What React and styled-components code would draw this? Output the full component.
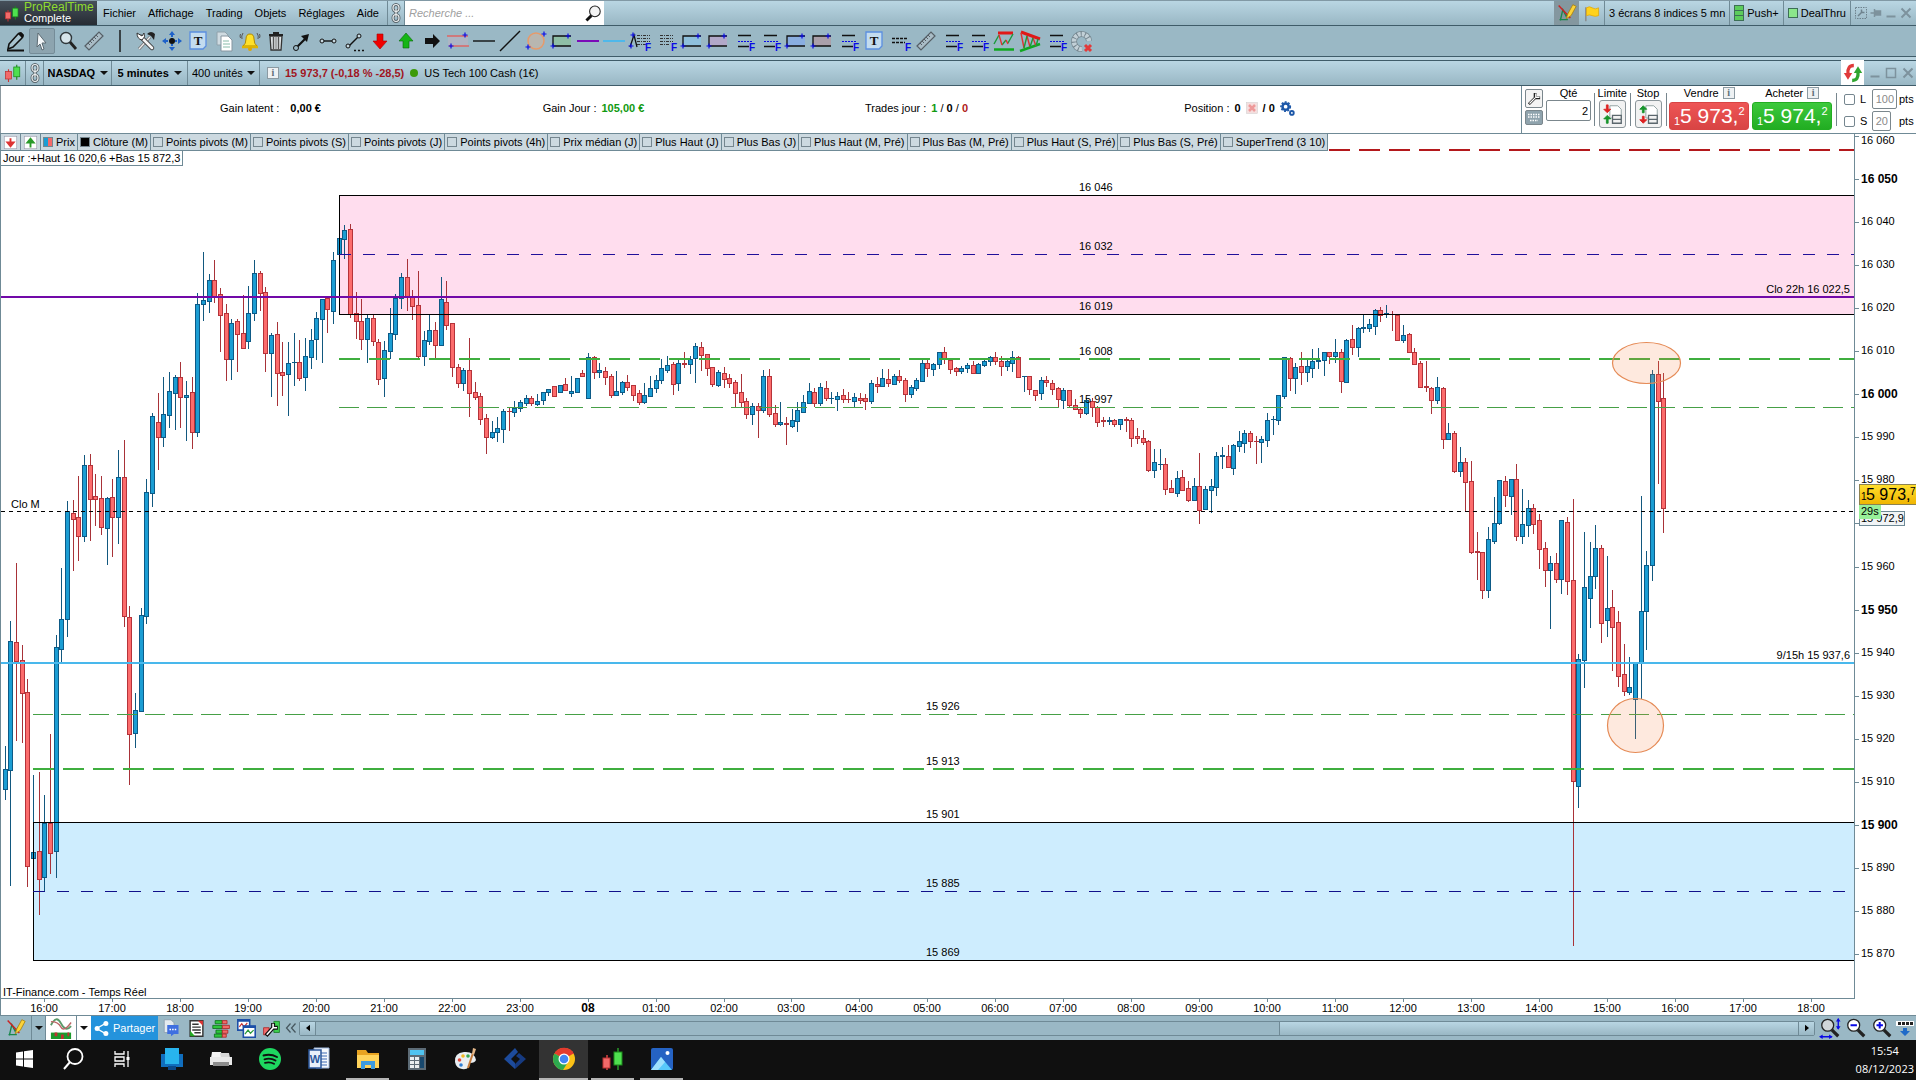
import React from "react";
import styled, { createGlobalStyle } from "styled-components";

const Global = createGlobalStyle`
  *, *::before, *::after { box-sizing: border-box; }
  html, body { margin: 0; padding: 0; background: #fff; }
  body, button, input, select {
    font-family: "Liberation Sans", Arial, sans-serif;
    font-size: 11px;
    color: #000;
  }
  button, select { border: 0; background: none; padding: 0; margin: 0; cursor: pointer; }
`;

/* ---------- shared pieces ---------- */

const chrome = "linear-gradient(#b9d6e3, #99b7c4)";
const edge = "#6f8a96";
const dark = "#3f5c69";

const Glyph = styled.svg`
  display: block;
  flex: none;
  width: ${(p) => p.$w || 24}px;
  height: ${(p) => p.$h || 24}px;
`;

const Icon = ({ w = 24, h = w, box = "0 0 24 24", children }) => (
  <Glyph $w={w} $h={h} viewBox={box} aria-hidden="true" fill="none">
    {children}
  </Glyph>
);

const App_ = styled.div`
  display: flex;
  flex-direction: column;
  min-width: 1400px;
  overflow: hidden;
`;

const Spacer = styled.div`
  flex: 1;
`;

const IconButton = styled.button`
  display: flex;
  align-items: center;
  justify-content: center;
  flex: none;
  width: ${(p) => p.$w || 16}px;
  align-self: stretch;
  background: ${(p) => p.$bg || "none"};
`;

/* ---------- menu bar ---------- */

const MenuBar = styled.header`
  display: flex;
  height: 26px;
  background: ${chrome};
  border-top: 1px solid #8199a5;
  border-bottom: 1px solid ${dark};
`;

const Brand = styled.div`
  display: flex;
  align-items: center;
  gap: 4px;
  width: 97px;
  padding-left: 4px;
  background: linear-gradient(#46505a, #262c33);
  color: #fff;
  line-height: 11px;
`;

const BrandName = styled.strong`
  display: block;
  color: #8fdc2e;
  font-size: 12px;
  font-weight: 400;
`;

const Menu = styled.nav`
  display: flex;
  align-items: center;
  gap: 12px;
  width: 290px;
  padding-left: 6px;
  white-space: nowrap;
`;

const ChainCell = styled.div`
  display: flex;
  align-items: center;
  justify-content: center;
  width: 18px;
  border-left: 1px solid ${edge};
  border-right: 1px solid ${edge};
`;

const Search = styled.label`
  display: flex;
  align-items: center;
  width: 199px;
  padding: 0 2px;
  background: #fff;
`;

const SearchInput = styled.input`
  flex: 1;
  min-width: 0;
  border: 0;
  outline: 0;
  font-style: italic;
  &::placeholder { color: #a0a0a0; }
`;

const MenuCell = styled.div`
  display: flex;
  align-items: center;
  gap: 3px;
  padding: 0 4px;
  border-left: 1px solid ${edge};
  white-space: nowrap;
`;

const Meter = styled.span`
  width: 10px;
  height: ${(p) => p.$h}px;
  border: 1px solid #3d6f56;
  background: ${(p) =>
    p.$bars
      ? "repeating-linear-gradient(#5ccc5c 0 4px, #3d6f56 4px 5px)"
      : "#8be68b"};
`;

/* ---------- drawing toolbar ---------- */

const ToolBar = styled.div`
  display: flex;
  align-items: center;
  height: 31px;
  padding-left: 3px;
  background: #9ab8c5;
  border-bottom: 1px solid ${dark};
`;

const Tool = styled.button`
  display: flex;
  align-items: center;
  justify-content: center;
  width: 26px;
  height: 26px;
  border-radius: 2px;
  background: ${(p) => (p.$on ? "#8da4af" : "none")};
  border: 1px solid ${(p) => (p.$on ? "#758c98" : "transparent")};
`;

const black = "#111";
const blue = "#0a0ae6";

const Plus = ({ x, y }) => (
  <path d={`M${x - 2.5} ${y}h5M${x} ${y - 2.5}v5`} stroke={blue} strokeWidth="1.2" />
);

const FLetter = () => (
  <text x="17" y="22" fontSize="10" fontWeight="700" fill={blue}>F</text>
);

const Levels = () => (
  <>
    <path d="M6 6.5h13M6 17.5h11" stroke={black} strokeWidth="1.4" />
    <path d="M6 12.5h14" stroke={blue} strokeWidth="1.2" strokeDasharray="2 1" />
    <FLetter />
  </>
);

const Box = ({ fill }) => (
  <>
    <rect x="3" y="7" width="18" height="10" fill={fill} />
    <path d="M3 17V7h18M3 17h18" stroke={black} strokeWidth="1.3" />
    <Plus x={18} y={7} />
    <Plus x={3} y={17} />
  </>
);

const RulerArt = () => (
  <>
    <path d="M3 17 17 3l4 4L7 21z" stroke="#555f66" strokeWidth="1.2" fill="#a9bcc6" />
    <path d="m6 14 2 2m0-4 2 2m0-4 2 2m0-4 2 2m0-4 2 2" stroke="#555f66" />
  </>
);

const TextArt = () => (
  <>
    <path d="M4 3h16v14l-3 3H4z" fill="#c3dcef" stroke="#5b8fe0" strokeWidth="1.3" />
    <text x="12" y="16" textAnchor="middle" fontFamily="Liberation Serif, serif" fontWeight="700" fontSize="13" fill="#111">T</text>
  </>
);

const Dashes = ({ x = 6 }) => (
  <path d={`M${x} 6.5h13M${x} 9.5h13M${x} 12.5h13M${x} 15.5h10`} stroke="#333" strokeWidth="1.2" strokeDasharray="3 1 1 1" />
);

const tools = [
  ["Crayon", <><path d="m5 15 9-10q2-2 4 0t0 4L9 18l-5 2z" stroke={black} strokeWidth="1.6" fill="#a8c3cf" /><path d="M3 21.5h17" stroke={black} strokeWidth="2" /><path d="m14 5 4 4 2-3-3-3z" fill={black} /></>],
  ["Pointeur", <path d="m8 4 8 10h-4l2 6-2 1-2-6-3 3z" fill="#f3f6f8" stroke="#5c6a72" />],
  ["Loupe", <><circle cx="10" cy="9" r="5.5" fill="#d6e4ea" stroke="#30383c" strokeWidth="1.4" /><path d="m14 13 6 7" stroke="#222" strokeWidth="2.8" /></>],
  ["Règle", <RulerArt />],
  ["Séparateur", <path d="M12 1v22" stroke={black} strokeWidth="1.4" />],
  ["Outils", <><path d="m5 20 11-12" stroke="#777" strokeWidth="3" /><path d="m5 20 11-12" stroke="#eee" strokeWidth="1.2" /><path d="M13 5q4-4 8 0l-1 6-3-4z" fill="#222" /><path d="m7 8 11 11" stroke="#333" strokeWidth="4.500" strokeLinecap="round" /><path d="m7 8 11 11" stroke="#f4f4f4" strokeWidth="2.800" strokeLinecap="round" /><path d="M3 4q0 6 5 7 4-3 2-7L8 7z" fill="#fff" stroke="#333" /></>],
  ["Déplacer", <><path d="m12 2 3 4H9zM12 22l3-4H9zM2 12l4-3v6zM22 12l-4-3v6z" fill="#1f62c9" /><path d="M12 6v12M6 12h12" stroke="#1f62c9" strokeWidth="2" strokeDasharray="2 1" /><circle cx="12" cy="12" r="3" fill="#111" /></>],
  ["Texte", <TextArt />],
  ["Copier", <><path d="M5 3h8l3 3v10H5z" fill="#cfdbe1" stroke="#90a2ab" /><path d="M9 7h7l4 4v11H9z" fill="#fff" stroke="#8595a0" /><path d="M11 12h6M11 15h7M11 18h7" stroke="#8ba" /></>],
  ["Alarme", <><path d="M5 17q3-2 3-7 0-5 4-5t4 5q0 5 3 7z" fill="#ffe02a" stroke="#b08a00" /><path d="M4 18h16" stroke="#e0b400" strokeWidth="2.500" /><circle cx="12" cy="20" r="2" fill="#e0a800" /><path d="M5 4Q3 7 4 10M19 4q2 3 1 6M2.500 5q-1 2 0 4M21.500 5q1 2 0 4" stroke="#555" /></>],
  ["Supprimer", <><path d="M6 7h12l-1 14H7z" fill="#dfe3e5" stroke="#333" strokeWidth="1.3" /><path d="M9.500 8v12M14.500 8v12" stroke="#555" strokeWidth="1.400" /><path d="M12 8v12" stroke="#777" /><path d="M5 6h14M9 4h6" stroke="#222" strokeWidth="2" /></>],
  ["Flèche", <><path d="m7 18 9-9" stroke={black} strokeWidth="2.2" /><path d="m19 5-2 8-6-6z" fill={black} /><circle cx="6" cy="19" r="2.500" fill="#9ab8c5" stroke={black} /></>],
  ["Segment", <><path d="M6 12h12" stroke={black} strokeWidth="1.4" /><circle cx="6" cy="12" r="2" fill="#c6d8e0" stroke={black} /><circle cx="18" cy="12" r="2" fill="#c6d8e0" stroke={black} /></>],
  ["Prolongement", <><path d="m7 17 9-9" stroke={black} strokeWidth="1.4" /><circle cx="6" cy="17" r="2" fill="#c6d8e0" stroke={black} /><circle cx="17" cy="7" r="2" fill="#c6d8e0" stroke={black} /><path d="M12 21.500h10" stroke={black} strokeWidth="1.4" strokeDasharray="2 2" /></>],
  ["Flèche baissière", <path d="M9 5h6v7h4l-7 8-7-8h4z" fill="#f00000" stroke="#a00" strokeWidth=".6" />],
  ["Flèche haussière", <path d="M9 19h6v-7h4l-7-8-7 8h4z" fill="#16b516" stroke="#086808" strokeWidth=".6" />],
  ["Flèche droite", <path d="M5 9h8V5l7 7-7 7v-4H5z" fill={black} />],
  ["Canal", <><rect x="2" y="7" width="20" height="10" fill="#aeb5c3" /><path d="M1 7h21M3 17h20" stroke="#d66" strokeWidth="1.4" /><Plus x={19} y={6} /><Plus x={5} y={17} /></>],
  ["Ligne horizontale", <path d="M1 12h22" stroke={black} strokeWidth="1.4" />],
  ["Ligne oblique", <path d="M2 22 22 2" stroke={black} strokeWidth="1.4" />],
  ["Ellipse", <><circle cx="12" cy="12" r="8" fill="#b8b6b0" stroke="#e79a6a" strokeWidth="1.5" /><Plus x={20} y={5} /><Plus x={4} y={18} /></>],
  ["Rectangle vert", <Box fill="#8fbfa6" />],
  ["Ligne violette", <path d="M1 12h22" stroke="#7a0bb8" strokeWidth="2" />],
  ["Ligne bleue", <path d="M1 12h22" stroke="#4fb8ea" strokeWidth="2" />],
  ["Fourchette", <><path d="m2 18 4-12 3 12" stroke={black} strokeWidth="1.3" /><Dashes x={9} /><Plus x={5} y={6} /><Plus x={3} y={17} /><FLetter /></>],
  ["Fibonacci", <><Dashes /><FLetter /></>],
  ["Rectangle bleu", <Box fill="#8fc0dc" />],
  ["Rectangle mauve", <Box fill="#b2a8c8" />],
  ["Niveaux 1", <Levels />],
  ["Niveaux 2", <Levels />],
  ["Rectangle azur", <Box fill="#8aaee0" />],
  ["Rectangle gris", <Box fill="#aaa0aa" />],
  ["Niveaux 3", <Levels />],
  ["Étiquette", <TextArt />],
  ["Projection", <><path d="M4 9.500h15M4 13.500h13" stroke={black} strokeWidth="1.3" strokeDasharray="3 1" /><FLetter /></>],
  ["Mesure", <RulerArt />],
  ["Niveaux 4", <Levels />],
  ["Niveaux 5", <Levels />],
  ["Range", <><path d="M6 4h15" stroke="#e01818" strokeWidth="3" /><path d="M2 20.500h20" stroke="#10a820" strokeWidth="2.500" /><path d="m2 15 5-9M10 16l4-5M16 14l5-9" stroke="#1a9a3a" strokeWidth="1.400" /><path d="m7 6 3 10M14 11l2 4" stroke="#d33" strokeWidth="1.400" /></>],
  ["Triangle", <><path d="m3 3 19 7" stroke="#e01818" strokeWidth="3" /><path d="m2 22 20-7" stroke="#10a820" strokeWidth="2.500" /><path d="m3 4 3 15M9 7l3 11M15 9l3 8" stroke="#d33" strokeWidth="1.400" /><path d="M6 19 9 7M12 18l3-9M18 17l2-7" stroke="#1a9a3a" strokeWidth="1.400" /></>],
  ["Niveaux 6", <Levels />],
  ["Aimant", <><path d="M19 12a7.500 7.500 0 1 0-7 8" stroke="#74858e" strokeWidth="6" /><path d="M19 12a7.500 7.500 0 1 0-7 8" stroke="#c2d0d7" strokeWidth="4.500" strokeDasharray="3 1" /><path d="m15 16 6 6m0-6-6 6" stroke="#e23a3a" strokeWidth="3" /></>],
];

/* ---------- instrument bar ---------- */

const InstrumentWrap = styled.div`
  display: flex;
  height: 29px;
  padding-top: 3px;
  background: #b9d3df;
  border-bottom: 1px solid ${dark};
`;

const InstrumentBar = styled.div`
  display: flex;
  flex: 1;
  align-items: stretch;
  background: ${chrome};
  border-top: 1px solid ${dark};
`;

const Cell = styled.div`
  display: flex;
  align-items: center;
  justify-content: center;
  gap: 4px;
  width: ${(p) => p.$w}px;
  border-right: 1px solid ${edge};
`;

const Drop = styled.select`
  appearance: none;
  outline: 0;
  font-weight: ${(p) => (p.$bold ? 700 : 400)};
`;

const Caret = styled.span`
  width: 0;
  border: 4px solid transparent;
  border-top-color: #111;
  border-bottom: 0;
`;

const Info = styled.button`
  width: 12px;
  height: 12px;
  border: 1px solid #8b9aa2;
  background: #eef1f3;
  color: #5f6f78;
  font: 700 10px/10px "Liberation Serif", serif;
`;

const Quote = styled.div`
  display: flex;
  align-items: center;
  gap: 6px;
  padding-left: 7px;
  white-space: nowrap;
`;

const Change = styled.strong`
  color: #a01522;
`;

const Dot = styled.span`
  width: 8px;
  height: 8px;
  border-radius: 50%;
  background: #3c9a0a;
`;

const SyncTab = styled.button`
  display: flex;
  align-items: center;
  justify-content: center;
  width: 23px;
  background: #fff;
`;

const WindowButtons = styled.div`
  display: flex;
  align-items: center;
  justify-content: space-around;
  width: 52px;
  padding-left: 3px;
  background: ${chrome};
  border-top: 1px solid ${dark};
`;

/* ---------- trading panel ---------- */

const TradePanel = styled.section`
  display: flex;
  height: 47px;
  border-left: 1px solid #8b989f;
`;

const Stats = styled.div`
  display: grid;
  flex: 1;
  grid-template-columns: repeat(4, 1fr);
  align-items: center;
  padding: 0 120px 3px 108px;
  border-right: 1px solid ${edge};
`;

const Stat = styled.div`
  display: flex;
  align-items: center;
  justify-content: center;
  gap: ${(p) => p.$gap || 5}px;
  white-space: nowrap;
`;

const Value = styled.strong`
  color: ${(p) => p.$c || "#000"};
`;

const Order = styled.div`
  display: flex;
  width: 394px;
  padding: 1px 0 3px 3px;
  gap: 3px;
`;

const Stack = styled.div`
  display: flex;
  flex-direction: column;
  align-items: center;
  gap: ${(p) => p.$gap || 0}px;
  flex: none;
  width: ${(p) => p.$w}px;
  padding-top: ${(p) => p.$top || 0}px;
`;

const Divider = styled.span`
  width: 1px;
  margin: ${(p) => (p.$wide ? "6px 3px 4px 1px" : "6px 0 4px")};
  background: #77868e;
`;

const SmallButton = styled.button`
  display: flex;
  align-items: center;
  justify-content: center;
  width: 18px;
  height: ${(p) => p.$h}px;
  border-radius: 2px;
  border: 1px solid #7b878d;
  background: ${(p) => p.$bg || "#f4f4f4"};
`;

const Caption = styled.label`
  display: flex;
  align-items: flex-start;
  gap: 4px;
  height: ${(p) => p.$h || 13}px;
  line-height: 12px;
  white-space: nowrap;
`;

const Qty = styled.input`
  width: 45px;
  height: 21px;
  padding: 0 2px;
  border: 1px solid #7b878d;
  border-radius: 2px;
  text-align: right;
`;

const OrderButton = styled.button`
  display: flex;
  align-items: center;
  justify-content: center;
  width: 27px;
  height: 28px;
  border: 1px solid #8b959a;
  border-radius: 3px;
  background: #f2f2f2;
`;

const PriceButton = styled.button`
  display: flex;
  align-items: center;
  justify-content: center;
  width: 80px;
  height: 28px;
  border-radius: 3px;
  border: 1px solid ${(p) => p.$c2};
  background: linear-gradient(${(p) => p.$c1}, ${(p) => p.$c2});
  color: #fff;
  font-size: 21px;
  line-height: 26px;
  white-space: nowrap;
`;

const Lead = styled.small`
  align-self: flex-end;
  font-size: 11px;
  line-height: 16px;
`;

const Trail = styled.small`
  align-self: flex-start;
  font-size: 11px;
  line-height: 16px;
`;

const StopRow = styled.label`
  display: grid;
  grid-template-columns: 14px 10px 25px 16px;
  align-items: center;
  gap: 2px;
  height: 22px;
`;

const Tick = styled.input.attrs({ type: "checkbox" })`
  appearance: none;
  flex: none;
  width: ${(p) => p.$s || 9}px;
  height: ${(p) => p.$s || 9}px;
  margin: 0;
  border: 1px solid #75868f;
  border-radius: ${(p) => p.$r || 0}px;
  background: ${(p) => p.$bg || "transparent"};
`;

const Points = styled.input`
  width: ${(p) => p.$w}px;
  height: 20px;
  padding: 0 2px;
  border: 1px solid #7b878d;
  border-radius: 2px;
  color: #8a8a8a;
  text-align: right;
`;

const Pts = styled.span`
  white-space: nowrap;
`;

/* ---------- chart ---------- */

const ChartArea = styled.main`
  position: relative;
`;

const Legend = styled.div`
  position: absolute;
  left: 0;
  top: 0;
  display: flex;
  flex-direction: column;
  align-items: flex-start;
`;

const LegendBar = styled.div`
  display: flex;
  height: 18px;
  border: 1px solid ${edge};
  border-right: 0;
  background: #ccd9e0;
`;

const LegendItem = styled.label`
  display: flex;
  align-items: center;
  gap: 3px;
  padding: 0 2px;
  border-right: 1px solid ${edge};
  white-space: nowrap;
`;

const DayRange = styled.div`
  height: 15px;
  padding: 0 2px;
  border: 1px solid ${edge};
  border-top: 0;
  background: #fff;
  line-height: 14px;
`;

const Plot = styled.svg`
  display: block;
  width: 100%;
  height: auto;
`;

const indicators = [
  "Points pivots (M)", "Points pivots (S)", "Points pivots (J)", "Points pivots (4h)",
  "Prix médian (J)", "Plus Haut (J)", "Plus Bas (J)", "Plus Haut (M, Pré)",
  "Plus Bas (M, Pré)", "Plus Haut (S, Pré)", "Plus Bas (S, Pré)", "SuperTrend (3 10)",
];

/* Each candle: direction + abscissa, high, body top, body bottom, low */
const candles = `
B5 746 769 789 799|B10 621 641 770 885|R16 563 642 661 740|R22 645 660 693 742|R27 679 692 866 886
B33 775 852 858 858|R39 772 851 879 914|B44 795 823 877 890|R50 734 823 853 873|B56 635 647 851 877
B61 568 619 649 662|B67 501 511 619 636|R73 500 513 519 570|R78 476 517 536 560|B84 455 465 536 541
R90 454 465 499 540|R95 474 496 499 525|R101 476 498 527 534|B107 497 498 528 564|R112 479 497 517 556
B118 450 477 517 543|R124 440 477 616 626|R129 606 617 734 784|B135 693 710 733 747|B141 608 615 711 711
B146 479 492 616 623|B152 413 416 493 506|R158 393 422 437 469|B163 377 414 437 446|B169 372 391 415 427
B175 375 377 393 429|R180 362 377 397 427|B186 381 395 397 440|R192 377 392 432 448|B197 293 304 432 436
B203 252 300 304 320|B209 274 280 301 312|R214 260 280 296 302|R220 288 294 315 351|R226 304 313 359 380
B231 319 323 359 379|R237 319 321 334 371|R243 295 333 348 348|B248 286 313 341 348|B254 260 273 313 320
R260 271 273 293 310|R265 287 292 353 371|B271 333 335 353 396|R277 322 334 373 405|R282 342 372 375 395
B288 342 363 374 415|B294 333 362 362 385|R299 340 362 378 380|B305 338 356 377 390|B311 329 340 357 368
B316 312 318 339 359|B322 299 299 319 362|R327 297 298 309 332|B333 252 260 311 323|B339 238 238 254 254
B344 225 230 239 258|R350 224 229 314 317|R356 292 313 321 338|R361 299 321 339 349|B367 315 318 339 362
R373 315 318 341 345|R378 339 342 379 384|B384 341 350 378 396|B390 308 333 351 358|B395 294 298 334 339
B401 273 277 298 308|R407 259 277 296 310|R412 290 297 306 319|R418 271 305 356 358|B424 331 340 356 365
B429 315 330 341 344|R435 322 330 345 359|B441 277 299 345 345|R446 281 302 325 329|R452 323 323 367 376
R458 364 367 383 387|B463 368 370 383 390|R469 338 370 393 416|R475 382 392 397 399|R480 393 396 419 424
R486 414 418 437 453|B492 421 432 437 438|B497 417 428 432 441|B503 409 411 429 442|R509 408 411 411 430
B514 401 408 412 416|B520 400 402 408 411|B526 395 398 403 405|R531 396 398 403 405|B537 394 401 404 405
B543 392 392 400 404|B548 389 389 392 395|R554 386 386 396 396|B560 385 385 392 392|R565 378 384 390 390
B571 376 391 393 396|B577 378 378 392 392|R582 370 373 376 376|B588 353 357 398 398|R594 356 357 372 378
B599 363 370 372 377|R605 367 371 377 384|R611 374 376 395 397|B616 371 391 395 395|B622 381 382 392 394
R627 375 382 387 390|R633 385 385 395 400|R639 390 393 402 404|B644 383 395 402 403|B650 376 388 396 396
B656 375 380 388 392|B661 359 368 380 383|B667 356 365 370 372|R673 362 364 384 394|B678 360 363 383 390
R684 352 363 364 367|B690 356 359 364 373|B695 343 346 358 382|R701 342 347 355 370|R707 354 354 368 375
R712 367 367 384 386|B718 370 372 385 386|R724 367 373 379 387|R729 374 378 383 387|R735 380 382 393 407
R741 374 392 402 406|R746 398 401 414 418|B752 403 406 414 424|R758 403 406 410 437|B763 370 376 410 412
R769 369 376 414 416|R775 405 413 424 426|B780 402 422 424 425|R786 417 423 424 444|B792 409 420 426 427
B797 402 410 421 431|B803 395 402 412 412|B809 383 391 403 403|R814 388 392 403 406|B820 383 387 403 405
R826 381 388 398 400|B831 392 398 398 403|B837 392 396 399 410|R843 389 395 399 402|R848 392 399 399 402
B854 393 397 401 406|R860 393 398 400 403|R865 394 398 401 409|B871 380 383 401 403|R877 377 384 386 392
B882 369 378 386 386|R888 369 379 383 386|B894 374 376 384 384|R899 370 376 380 382|R905 378 380 394 401
B911 385 387 394 397|B916 378 380 388 390|B922 360 363 381 381|R927 360 363 368 376|B933 363 364 369 375
B939 352 352 364 368|R944 347 352 359 363|R950 359 360 369 373|R956 367 368 371 375|B961 366 368 371 373
B967 363 365 368 372|R973 361 365 373 373|B978 363 364 373 373|B984 360 361 365 366|B990 356 357 361 365
R995 352 357 361 364|R1001 356 361 366 375|B1007 360 361 366 370|B1012 351 357 363 371|R1018 356 357 377 377
B1024 376 376 376 391|R1029 376 376 389 394|R1035 390 390 395 400|B1041 377 380 393 399|R1046 376 380 382 386
R1052 380 383 389 394|R1058 387 388 399 407|B1063 388 390 400 408|R1069 390 390 405 407|R1075 399 405 409 409
R1080 408 409 413 417|B1086 398 400 413 414|R1092 398 401 407 416|R1097 406 407 422 426|R1103 417 420 421 426
B1109 417 420 421 424|R1114 419 420 424 426|B1120 419 419 424 429|R1126 417 419 420 431|R1131 418 420 438 446
R1137 428 436 438 443|R1143 430 438 442 444|R1148 440 441 470 471|B1154 449 462 470 477|B1160 449 464 464 469
R1165 458 464 489 494|R1171 480 488 492 492|B1177 471 478 493 496|R1182 470 477 490 490|R1188 481 488 500 501
B1194 478 486 500 500|R1199 453 486 510 523|B1205 486 489 509 509|B1211 479 486 490 512|B1216 452 456 487 495
B1222 447 455 456 468|R1228 445 456 467 467|B1233 444 445 468 474|B1239 431 441 446 451|B1244 430 433 443 452
R1250 431 433 441 447|R1256 436 441 441 463|B1261 436 439 442 462|B1267 413 420 440 446|B1273 416 419 419 434
B1278 395 395 420 424|B1284 357 357 396 398|R1290 357 358 378 390|B1295 363 367 378 393|R1301 352 366 372 384
B1307 360 366 372 381|B1312 349 361 368 377|B1318 348 360 361 368|B1324 352 352 360 375|R1329 352 352 356 363
B1335 339 352 356 362|R1341 349 352 381 392|B1346 339 340 382 382|R1352 325 339 347 354|B1358 327 328 347 356
B1363 314 327 328 332|B1369 319 324 328 331|B1375 309 310 326 334|R1380 307 310 315 321|B1386 305 313 314 317
R1392 311 314 314 330|R1397 315 315 340 340|B1403 325 335 340 342|R1409 333 334 352 352|R1414 348 352 364 364
R1420 361 363 387 387|R1426 361 386 387 391|R1431 387 388 400 413|B1437 377 387 400 403|R1443 387 388 439 448
B1448 423 433 439 439|R1454 431 433 471 472|B1460 447 462 471 476|R1465 458 462 482 510|R1471 461 481 552 553
R1477 532 551 552 579|R1482 552 552 590 598|B1488 527 539 590 597|B1494 497 523 541 543|B1499 480 480 523 524
R1505 476 481 495 506|B1511 479 479 496 514|R1516 464 479 536 540|B1522 489 524 536 543|B1528 500 508 525 536
R1533 504 508 524 533|R1539 514 520 549 568|R1545 542 548 570 586|B1550 556 563 570 628|R1556 553 563 579 582
B1561 520 520 579 593|R1567 517 522 581 594|R1573 499 580 781 945|B1578 654 659 786 807|B1584 532 587 660 687
B1590 542 576 598 627|B1595 525 548 576 588|R1601 545 548 623 642|B1607 556 608 620 636|R1612 590 607 627 670
R1618 611 622 676 686|R1624 644 674 691 695|B1629 657 687 692 694|B1635 663 663 699 738|B1641 496 611 662 698
B1646 551 565 611 649|B1652 370 374 565 580|R1658 361 374 401 483|R1663 373 398 508 532`
  .trim()
  .split(/[|\n]/)
  .map((row) => {
    const [head, ...v] = row.split(" ");
    const [high, top, bottom, low] = v.map(Number);
    return { up: head[0] === "B", x: Number(head.slice(1)), high, top, bottom, low };
  });

const Candle = ({ up, x, high, top, bottom, low }) => (
  <>
    <rect x={x} y={high} width="1" height={low - high + 1} fill={up ? "#12587f" : "#a83238"} />
    <rect x={x - 2} y={top} width="5" height={bottom - top + 1} fill={up ? "#0d5a86" : "#b5333a"} />
    {bottom - top > 1 && (
      <rect x={x - 1} y={top + 1} width="3" height={bottom - top - 1} fill={up ? "#1b9dd3" : "#fc6c6c"} />
    )}
  </>
);

const AXIS = 1854;
const levels = [
  [1079, 195, "16 046"], [1079, 254, "16 032"], [1079, 314, "16 019"], [1079, 359, "16 008"], [1079, 407, "15 997"],
  [926, 714, "15 926"], [926, 769, "15 913"], [926, 822, "15 901"], [926, 891, "15 885"], [926, 960, "15 869"],
];
const prices = Array.from({ length: 20 }, (_, i) => 16060 - i * 10);
const priceY = (p) => Math.round(136 + (16060 - p) * 4.305);
const priceText = (p) => `${Math.floor(p / 1000)} ${String(p % 1000).padStart(3, "0")}`;
const hours = Array.from({ length: 27 }, (_, i) => (i === 8 ? "08" : `${String((16 + i) % 24).padStart(2, "0")}:00`));

const Line = ({ from = 1, y, w = 1, c, dash }) => (
  <line x1={from} x2={AXIS} y1={y + w / 2} y2={y + w / 2} stroke={c} strokeWidth={w} strokeDasharray={dash} />
);

const PriceChart = () => (
  <Plot viewBox="0 133 1916 883" role="img" aria-label="US Tech 100 Cash, 5 minutes" fontFamily="Liberation Sans, Arial, sans-serif" fontSize="11">
    <g shapeRendering="crispEdges">
      <rect x="339" y="195" width={AXIS - 339} height="119" fill="#ffddee" />
      <rect x="33" y="822" width={AXIS - 33} height="138" fill="#ceedfe" />
      {candles.map((c) => <Candle key={c.x} {...c} />)}
      <Line from={339} y={195} c="#000" />
      <Line from={339} y={314} c="#000" />
      <Line from={33} y={822} c="#000" />
      <Line from={33} y={960} c="#000" />
      <path d="M339.500 195v119M33.500 822v138" stroke="#000" />
      <Line from={339} y={254} c="#20109a" dash="12 12" />
      <Line from={33} y={891} c="#10108a" dash="12 12" />
      <Line from={339} y={358} w={2} c="#3fae3f" dash="21 9" />
      <Line from={339} y={407} c="#46a046" dash="20 8" />
      <Line from={33} y={768} w={2} c="#3fae3f" dash="21 9" />
      <Line from={33} y={714} c="#46a046" dash="20 8" />
      <Line from={1329} y={149} w={2} c="#b4181c" dash="21 9" />
      <Line y={296} w={2} c="#7109a8" />
      <Line y={662} w={2} c="#49b8ec" />
      <Line y={511} c="#000" dash="4 4" />
    </g>
    <g fill="#f9854a" fillOpacity=".18" stroke="#e58a55" strokeWidth="1.2">
      <ellipse cx="1646.500" cy="363" rx="34" ry="20.500" />
      <ellipse cx="1635.500" cy="725.500" rx="28" ry="27" />
    </g>
    {levels.map(([x, y, t]) => <text key={t} x={x} y={y - 4}>{t}</text>)}
    <text x="11" y="508">Clo M</text>
    <text x="1850" y="293" textAnchor="end">Clo 22h 16 022,5</text>
    <text x="1850" y="659" textAnchor="end">9/15h 15 937,6</text>
    <text x="3" y="996">IT-Finance.com - Temps Réel</text>

    <g shapeRendering="crispEdges" stroke={edge}>
      <path d={`M0 133.500H1916M0.500 133V1016M0 998.500H${AXIS}.500V133M0 1015.500H1916`} fill="none" />
      {prices.map((p) => <path key={p} d={`M${AXIS} ${priceY(p)}.500h5`} />)}
      {hours.map((h, i) => <path key={i} d={`M${Math.round(44 + i * 67.950) + 0.500} 998v4`} />)}
    </g>
    {prices.filter((p) => p !== 15970).map((p, i) => {
      const strong = p % 50 === 0;
      return (
        <text key={p} x="1861" y={i === 0 ? 144 : priceY(p) + (strong ? 4 : 3)} fontWeight={strong ? 700 : 400} fontSize={strong ? 12 : 11}>
          {priceText(p)}
        </text>
      );
    })}
    {hours.map((h, i) => (
      <text key={i} x={Math.round(44 + i * 67.950)} y="1012" textAnchor="middle" fontWeight={i === 8 ? 700 : 400} fontSize={i === 8 ? 12 : 11}>{h}</text>
    ))}

    <defs>
      <linearGradient id="gold" x2="0" y2="1"><stop stopColor="#ffdf2e" /><stop offset="1" stopColor="#f0b400" /></linearGradient>
    </defs>
    <rect x="1859.500" y="511.500" width="45" height="14" fill="#f1f4f6" stroke={edge} />
    <text x="1861" y="522">15 972,9</text>
    <rect x="1859.500" y="484.500" width="60" height="20" fill="url(#gold)" stroke="#8c8250" />
    <text x="1861" y="500" fontSize="10">1</text>
    <text x="1866" y="500" fontSize="16">5 973,</text>
    <text x="1910" y="495" fontSize="10">7</text>
    <rect x="1859" y="505" width="22" height="14" fill="#98f098" />
    <text x="1861" y="515">29s</text>
  </Plot>
);

/* ---------- bottom toolbar ---------- */

const BottomBar = styled.div`
  display: flex;
  align-items: center;
  height: 24px;
  background: #9ab8c5;
`;

const BarButton = styled.button`
  display: flex;
  align-items: center;
  justify-content: center;
  flex: none;
  width: ${(p) => p.$w}px;
  height: 24px;
  background: ${(p) => p.$bg || "none"};
  border-right: 1px solid ${(p) => (p.$line ? edge : "transparent")};
`;

const Share = styled.button`
  display: flex;
  align-items: center;
  gap: 4px;
  flex: none;
  width: 67px;
  height: 24px;
  padding-left: 3px;
  background: #2493dc;
  color: #fff;
`;

const Scroller = styled.div`
  display: flex;
  flex: 1;
  height: 15px;
  margin: 0 2px 0 0;
  border: 1px solid ${edge};
  border-radius: 2px;
`;

const ScrollEnd = styled.button`
  display: flex;
  align-items: center;
  justify-content: center;
  width: 15px;
  background: ${chrome};
`;

const Track = styled.div`
  display: flex;
  flex: 1;
  border: solid ${edge};
  border-width: 0 1px;
`;

const Thumb = styled.div`
  flex: none;
  width: 35%;
  margin-left: auto;
  border-left: 1px solid ${edge};
  background: ${chrome};
`;

const ZoomGlass = ({ children, fill = "#fff" }) => (
  <Icon w={22}>
    <path d="m14 14 7 7" stroke="#222" strokeWidth="3.500" />
    <circle cx="9.500" cy="9" r="6.500" fill={fill} stroke="#222" strokeWidth="1.400" />
    {children}
  </Icon>
);

const PencilChart = () => (
  <Icon w={20}>
    <path d="m4 21 3-13 4 8 4-5M3 20h10" stroke="#18874c" strokeWidth="1.600" />
    <path d="m2 3 14 15" stroke="#c22" strokeWidth="1.800" />
    <path d="m11 19 2-6 6-11 4 2-6 11z" fill="#fbd33a" stroke="#a98210" />
  </Icon>
);

const CandlePair = ({ w = 18, h = 22 }) => (
  <Icon w={w} h={h}>
    <path d="M6 7v17" stroke="#c33" strokeWidth="1.500" />
    <rect x="2" y="10" width="8" height="10" fill="#f26a6a" stroke="#b33" />
    <path d="M17 1v20" stroke="#1a8a1a" strokeWidth="1.500" />
    <rect x="13" y="4" width="8" height="13" fill="#4fe04f" stroke="#1a8a1a" />
  </Icon>
);

const Chain = () => (
  <Icon w={12} h={20} box="0 0 12 20">
    {["#5a666c", "#eef1f2"].map((c, i) => (
      <g key={c} stroke={c} strokeWidth={i ? 1.2 : 3}>
        <ellipse cx="6" cy="5" rx="3" ry="3.500" />
        <ellipse cx="6" cy="15" rx="3" ry="3.500" />
        <path d="M6 6v8" />
      </g>
    ))}
  </Icon>
);

/* ---------- task bar ---------- */

const TaskBar = styled.footer`
  display: flex;
  height: 40px;
  background: #101010;
`;

const Task = styled.button`
  display: flex;
  align-items: center;
  justify-content: center;
  width: 49px;
  border-bottom: 2px solid transparent;
  background: ${(p) => (p.$active ? "#333" : "none")};
  border-image: ${(p) =>
    p.$open
      ? `linear-gradient(90deg, transparent ${p.$active ? 0 : 9}%, #b5b5b5 ${p.$active ? 0 : 9}% ${p.$active ? 100 : 91}%, transparent ${p.$active ? 100 : 91}%) 2`
      : "none"};
`;

const Clock = styled.time`
  display: flex;
  flex-direction: column;
  align-items: center;
  justify-content: center;
  padding-right: 2px;
  color: #fff;
  font: 11px/18px "Open Sans", "Noto Sans", sans-serif;
`;

const tasks = [
  ["Démarrer", <><path d="M3 5.500 10 4.500v7H3zM11 4.300 20 3v8.500h-9zM3 12.500h7v7l-7-1zM11 12.500h9V21l-9-1.300z" fill="#fff" /></>],
  ["Rechercher", <><circle cx="13" cy="9.500" r="7.500" stroke="#fff" strokeWidth="1.800" /><path d="m8 15-6 7" stroke="#fff" strokeWidth="2" /></>],
  ["Vue des tâches", <><path d="M4 4v3h9V4M4 20v-3h9v3M4 10h9v4H4zM17 4v16" stroke="#fff" strokeWidth="1.300" /><path d="M15.500 10h3v3h-3z" fill="#fff" /></>],
  ["Bureau", <><path d="M1 7h22v13H1z" fill="#106ebe" /><path d="M5 1h14v16H5z" fill="#28b4ee" /><path d="M8 19h8v4H8z" fill="#0b4a8c" /></>],
  ["Imprimante", <><path d="M3 5h9l2 6H2z" fill="#f3f3f3" /><path d="M11 6h9l1 5h-9z" fill="#d7d7d7" /><path d="M1 10h22v8H1z" fill="#e8e8e8" /><path d="M4 15h16v4H4z" fill="#8d8d8d" /></>],
  ["Spotify", <><circle cx="12" cy="12" r="11" fill="#1ed760" /><path d="M5.500 8.500q7-2.200 13.500 1.500M6.500 12.300q6-1.700 11 1.200M7 15.800q5-1.300 9 1" stroke="#101010" strokeWidth="1.900" strokeLinecap="round" /></>],
  ["Word", <><path d="M7 1h15v20H9z" fill="#f5f8fc" stroke="#9db6dc" /><path d="M14 6h6M14 9h6M14 12h6M14 15h6M14 18h6" stroke="#3a68b4" /><path d="M2 3h12v18H2z" fill="#e8effa" stroke="#2b579a" strokeWidth="1.500" /><text x="8" y="16" textAnchor="middle" fontSize="11" fontWeight="700" fill="#2b579a">W</text></>],
  ["Explorateur", <><path d="M1 3h9l2 3h11v15H1z" fill="#e8a321" /><path d="M1 8h22v13H1z" fill="#ffd35b" /><path d="M5 22v-8h14v8h-4v-4H9v4z" fill="#3d9be0" /></>],
  ["Calculatrice", <><path d="M3 1h18v22H3z" fill="#5c6b76" /><path d="M5 3h14v5H5z" fill="#4fc3f0" /><path d="M5 10h4v3H5zM10 10h4v3h-4zM5 14h4v3H5zM10 14h4v3h-4zM5 18h4v3H5zM10 18h4v3h-4z" fill="#e8edf0" /><path d="M15 10h4v11h-4z" fill="#17486e" /></>],
  ["Paint", <><path d="M1 15Q0 6 10 5t12 8q-1 3-6 3 0 7-8 6-6-1-7-7z" fill="#e9eef2" /><circle cx="5.500" cy="13" r="1.800" fill="#e14b3c" /><circle cx="9" cy="9" r="1.800" fill="#f2b824" /><circle cx="14" cy="9" r="1.800" fill="#38a852" /><circle cx="7" cy="18" r="1.800" fill="#2f7fd6" /><path d="m14 21 5-15" stroke="#c47a3a" strokeWidth="2" /><path d="m18 7 1-6 3 1-2 6z" fill="#e6b98a" /></>],
  ["TradeStation", <><path d="m12 1 3 4-7 7 4 4v6L1 12z" fill="#1d4b9c" /><path d="m16 6 7 6-11 10v-5l5-5-4-3z" fill="#163a80" /></>],
  ["Chrome", <><circle cx="12" cy="12" r="11" fill="#fbc116" /><path d="M12 12 2.500 6.500A11 11 0 0 1 21.500 6.500z" fill="#e33b2e" /><path d="M12 12 2.500 6.500A11 11 0 0 0 11 23l5-8z" fill="#2da94f" /><path d="M12 7h10a11 11 0 0 0-19.500-.5z" fill="#e33b2e" /><circle cx="12" cy="12" r="5.500" fill="#fff" /><circle cx="12" cy="12" r="4.300" fill="#4285f4" /></>, "active"],
  ["ProRealTime", <><path d="M6 8v15" stroke="#d44" strokeWidth="1.500" /><rect x="2" y="11" width="7" height="10" fill="#f26a6a" stroke="#b33" /><path d="M17 1v22" stroke="#2a9a2a" strokeWidth="1.500" /><rect x="13" y="5" width="8" height="13" fill="#4fe04f" stroke="#1a8a1a" /></>, "open"],
  ["Photos", <><rect x="1" y="1" width="22" height="22" rx="2" fill="#2563c4" /><path d="m1 23 10-13 11 13z" fill="#58c8fa" /><path d="m1 23 10-13 4 5-7 8z" fill="#9fe0fd" /><circle cx="17.500" cy="6" r="2" fill="#fff" /></>, "open"],
];

const DocMini = ({ swap }) => (
  <Icon w={21} h={21}>
    <path d="M9 2h9l4 4v10H9z" fill="#fff" stroke="#899" />
    <path d={swap ? "m6 2 4 4H7v4H5V6H2z" : "m6 10 4-4H7V1H5v5H2z"} fill={swap ? "#18942c" : "#d22"} stroke={swap ? "#18942c" : "#d22"} />
    <path d={swap ? "m6 22 4-4H7v-4H5v4H2z" : "m6 13 4 4H7v5H5v-5H2z"} fill={swap ? "#d22" : "#18942c"} stroke={swap ? "#d22" : "#18942c"} />
    <path d="M12 13h10v9H12zM12 17.500h10" fill="#f2f2f2" stroke="#5b676d" strokeWidth="1.500" />
  </Icon>
);

const Min = () => <Icon w={12}><path d="M3 19h18" stroke="#7d929d" strokeWidth="4" /></Icon>;
const Close = () => <Icon w={12}><path d="m3 3 18 18M21 3 3 21" stroke="#7d929d" strokeWidth="4" /></Icon>;

const PriceText = ({ digits }) => (
  <>
    <Lead>1</Lead>{digits}<Trail>2</Trail>
  </>
);

export default function App() {
  return (
    <App_>
      <Global />
      <MenuBar>
        <Brand>
          <CandlePair w={16} h={19} />
          <div><BrandName>ProRealTime</BrandName>Complete</div>
        </Brand>
        <Menu>
          {["Fichier", "Affichage", "Trading", "Objets", "Réglages", "Aide"].map((m) => (
            <button key={m}>{m}</button>
          ))}
        </Menu>
        <ChainCell><Chain /></ChainCell>
        <Search>
          <SearchInput aria-label="Recherche" placeholder="Recherche ..." />
          <Icon w={17}>
            <circle cx="14" cy="9" r="7.500" fill="#f4f4f4" stroke="#222" strokeWidth="1.500" />
            <path d="m9 15-7 7" stroke="#111" strokeWidth="4" />
          </Icon>
        </Search>
        <Spacer />
        <IconButton $w={25} $bg="#84979f" aria-label="Dessin"><PencilChart /></IconButton>
        <IconButton $w={25} aria-label="Drapeau">
          <Icon w={17}>
            <path d="M4 3v20" stroke="#888" strokeWidth="2" />
            <path d="M5 4q4-3 8 0t9 0v11q-5 2-9 0t-8 0z" fill="#ffd21c" stroke="#e0a400" />
          </Icon>
        </IconButton>
        <MenuCell>3 écrans 8 indices 5 mn</MenuCell>
        <MenuCell><Meter $h={16} $bars />Push+</MenuCell>
        <MenuCell><Meter $h={10} />DealThru</MenuCell>
        <MenuCell>
          <Icon w={12}>
            <rect x="1" y="1" width="22" height="22" stroke="#6f838e" strokeWidth="2" strokeDasharray="3 2" />
            <path d="m6 18 9-9M13 5v6h6" stroke="#6f838e" strokeWidth="3" />
          </Icon>
          <Icon w={12}><path d="M1 12h8M9 4v16M9 8h12v8H9z" stroke="#7d929d" strokeWidth="3" fill="#7d929d" /></Icon>
          <Min />
          <Close />
        </MenuCell>
      </MenuBar>

      <ToolBar role="toolbar">
        {tools.map(([name, art], i) => (
          <Tool key={name} $on={i === 1} aria-label={name}><Icon>{art}</Icon></Tool>
        ))}
      </ToolBar>

      <InstrumentWrap>
        <InstrumentBar>
          <Cell $w={26}><CandlePair /></Cell>
          <Cell $w={18}><Chain /></Cell>
          <Cell $w={68}>
            <Drop $bold aria-label="Instrument"><option>NASDAQ</option></Drop><Caret />
          </Cell>
          <Cell $w={76}>
            <Drop $bold aria-label="Unité de temps"><option>5 minutes</option></Drop><Caret />
          </Cell>
          <Cell $w={72}>
            <Drop aria-label="Historique"><option>400 unités</option></Drop><Caret />
          </Cell>
          <Quote>
            <Info aria-label="Informations">i</Info>
            <Change>15 973,7 (-0,18 % -28,5)</Change>
            <Dot />
            US Tech 100 Cash (1€)
          </Quote>
        </InstrumentBar>
        <SyncTab aria-label="Synchroniser">
          <Icon w={20}>
            <path d="M13 3q-8 0-7 10" stroke="#e03a3a" strokeWidth="4" />
            <path d="m1 12 5 8 5-8z" fill="#e03a3a" />
            <path d="M11 21q8 0 7-10" stroke="#2fa52f" strokeWidth="4" />
            <path d="m13 12 5-8 5 8z" fill="#2fa52f" />
          </Icon>
        </SyncTab>
        <WindowButtons>
          <Min />
          <Icon w={12}><rect x="3" y="3" width="18" height="18" stroke="#7d929d" strokeWidth="3" /></Icon>
          <Close />
        </WindowButtons>
      </InstrumentWrap>

      <TradePanel>
        <Stats>
          <Stat $gap={11}>Gain latent : <Value>0,00 €</Value></Stat>
          <Stat>Gain Jour : <Value $c="#119a11">105,00 €</Value></Stat>
          <Stat>
            Trades jour :
            <span><Value $c="#119a11">1</Value> / <Value>0</Value> / <Value $c="#b01a1a">0</Value></span>
          </Stat>
          <Stat>
            Position : <Value>0</Value>
            <Icon w={12}><rect x="1" y="1" width="22" height="22" fill="#f5dede" stroke="#ccc" /><path d="m6 6 12 12m0-12L6 18" stroke="#ee9a9a" strokeWidth="5" /></Icon>
            <Value>/ 0</Value>
            <Icon w={15}>
              <circle cx="9" cy="9" r="5" stroke="#1c57a8" strokeWidth="4" />
              <circle cx="9" cy="9" r="7.500" stroke="#1c57a8" strokeWidth="2.500" strokeDasharray="3 2.500" />
              <circle cx="19" cy="19" r="3" stroke="#1c57a8" strokeWidth="3" />
            </Icon>
          </Stat>
        </Stats>
        <Order>
          <Stack $w={18} $gap={2} $top={2}>
            <SmallButton $h={19} aria-label="Réglages">
              <Icon w={15}><path d="m3 21 10-10M13 3v8h8" stroke="#222" strokeWidth="4.500" /><path d="m4 20 9-9M14 4v6h6" stroke="#fff" strokeWidth="2" /></Icon>
            </SmallButton>
            <SmallButton $h={15} $bg="#8fa3ad" aria-label="Clavier">
              <Icon w={14} h={11} box="0 0 14 11"><path d="M1 2.500h12M1 5h12M3 8.500h8" stroke="#fff" strokeWidth="1.500" strokeDasharray="1.500 1" /></Icon>
            </SmallButton>
          </Stack>
          <Stack $w={45}>
            <Caption htmlFor="qty">Qté</Caption>
            <Qty id="qty" defaultValue="2" />
          </Stack>
          <Divider />
          <Stack $w={29}>
            <Caption as="span">Limite</Caption>
            <OrderButton aria-label="Ordre limite"><DocMini /></OrderButton>
          </Stack>
          <Divider />
          <Stack $w={29}>
            <Caption as="span">Stop</Caption>
            <OrderButton aria-label="Ordre stop"><DocMini swap /></OrderButton>
          </Stack>
          <Divider />
          <Stack $w={80}>
            <Caption as="span" $h={16}>Vendre <Info aria-label="Info vente">i</Info></Caption>
            <PriceButton $c1="#ee5555" $c2="#d84444"><PriceText digits="5 973," /></PriceButton>
          </Stack>
          <Stack $w={80}>
            <Caption as="span" $h={16}>Acheter <Info aria-label="Info achat">i</Info></Caption>
            <PriceButton $c1="#3cc93c" $c2="#22ad22"><PriceText digits="5 974," /></PriceButton>
          </Stack>
          <Divider $wide />
          <Stack $w={73} $gap={2} $top={2}>
            <StopRow><Tick $s={11} $r={2} $bg="#fff" />L<Points aria-label="Limite en points" $w={25} defaultValue="100" /><Pts>pts</Pts></StopRow>
            <StopRow><Tick $s={11} $r={2} $bg="#fff" />S<Points aria-label="Stop en points" $w={19} defaultValue="20" /><Pts>pts</Pts></StopRow>
          </Stack>
        </Order>
      </TradePanel>

      <ChartArea>
        <PriceChart />
        <Legend>
          <LegendBar>
            <LegendItem as="button" aria-label="Indicateur vers le bas">
              <Icon w={15}><rect x="2" y="2" width="20" height="20" fill="#fff" stroke="#99a" /><path d="M12 5v9M7 12l5 6 5-6z" stroke="#d33" strokeWidth="3" fill="#d33" /></Icon>
            </LegendItem>
            <LegendItem as="button" aria-label="Indicateur vers le haut">
              <Icon w={15}><rect x="2" y="2" width="20" height="20" fill="#fff" stroke="#99a" /><path d="M12 20v-8M7 12l5-6 5 6z" stroke="#2a9a2a" strokeWidth="3" fill="#2a9a2a" /></Icon>
            </LegendItem>
            <LegendItem><Tick $s={10} $bg="linear-gradient(90deg, #1b9dd3 50%, #f46a6a 50%)" />Prix</LegendItem>
            <LegendItem><Tick $s={10} $bg="#000" />Clôture (M)</LegendItem>
            {indicators.map((n) => <LegendItem key={n}><Tick $s={10} />{n}</LegendItem>)}
          </LegendBar>
          <DayRange>Jour :+Haut 16 020,6 +Bas 15 872,3</DayRange>
        </Legend>
      </ChartArea>

      <BottomBar>
        <BarButton $w={32} $line aria-label="Dessin"><PencilChart /></BarButton>
        <BarButton $w={14} $line aria-label="Options de dessin"><Caret /></BarButton>
        <BarButton $w={31} $line $bg="#fff" aria-label="Indicateurs">
          <Icon w={22}>
            <path d="M1 9Q7-3 12 7t11 3" stroke="#5a9a6a" strokeWidth="2" />
            <path d="M1 5q8 0 11 6t11-5" stroke="#b66" strokeWidth="1.500" />
            <path d="M1 17h22v7H1z" fill="#1b9a2c" />
            <path d="M5 17h3v4H5zM12 19h3v5h-3zM19 17h2v4h-2z" fill="#c03030" />
          </Icon>
        </BarButton>
        <BarButton $w={14} $bg="#fff" aria-label="Options d'indicateurs"><Caret /></BarButton>
        <Share>
          <Icon w={15}><path d="M20 3 4 12l16 9" stroke="#fff" strokeWidth="2" /><circle cx="19" cy="4" r="4" fill="#fff" /><circle cx="5" cy="12" r="4" fill="#fff" /><circle cx="19" cy="20" r="4" fill="#fff" /></Icon>
          Partager
        </Share>
        <BarButton $w={26} aria-label="Messages">
          <Icon w={18}><path d="M3 1h9l4 4v13H3z" fill="#e4ebef" stroke="#89a" /><path d="M7 8h15v12h-6l-4 3v-3H7z" fill="#3f6fe0" /><path d="M10 14h9" stroke="#fff" strokeWidth="2" strokeDasharray="2 1.500" /></Icon>
        </BarButton>
        <BarButton $w={25} aria-label="Ordres">
          <Icon w={17}><path d="M3 1h18v22H3z" fill="#fff" stroke="#333" strokeWidth="2" /><path d="M6 6h9M6 10h12M6 14h12M9 18h9" stroke="#333" strokeWidth="2" /><path d="M14 1h7v7z" fill="#d33" /><path d="M3 23v-8l7 8z" fill="#2a2" /></Icon>
        </BarButton>
        <BarButton $w={25} aria-label="Carnet">
          <Icon w={19}><path d="M4 2h9v4H4zM1 8h12v4H1zM5 14h8v4H5zM3 19h10v4H3z" fill="#2fc63f" stroke="#0a6a1a" /><path d="M13 2h6v4h-6zM13 8h9v4h-9zM13 14h7v4h-7zM13 19h5v4h-5z" fill="#f26a6a" stroke="#a22" /></Icon>
        </BarButton>
        <BarButton $w={25} aria-label="Fenêtres">
          <Icon w={19}><path d="M1 1h15v13H1z" fill="#fff" stroke="#1c4fa8" strokeWidth="2" /><path d="m3 10 3-4 3 4 4-5" stroke="#c33" strokeWidth="1.500" /><path d="M8 9h15v14H8z" fill="#fff" stroke="#1c4fa8" strokeWidth="2" /><path d="m10 19 4-5 3 4 4-4" stroke="#2a9a3a" strokeWidth="1.500" /><path d="M1 2h15M8 10h15" stroke="#1c4fa8" strokeWidth="3" /></Icon>
        </BarButton>
        <BarButton $w={25} aria-label="Configuration">
          <Icon w={19}><path d="M2 11h7v9H2z" fill="#f26a6a" stroke="#a22" /><path d="M15 3h7v14h-7z" fill="#3fd04f" stroke="#167a22" /><path d="m5 21 9-10M14 5v6h6" stroke="#111" strokeWidth="5" /><path d="m6 20 8-9M14 6v5h5" stroke="#fff" strokeWidth="2" /></Icon>
        </BarButton>
        <BarButton $w={15} aria-label="Replier">
          <Icon w={12}><path d="m11 3-8 9 8 9M21 3l-8 9 8 9" stroke="#46565e" strokeWidth="2.500" /></Icon>
        </BarButton>
        <Scroller>
          <ScrollEnd aria-label="Défiler à gauche"><Icon w={8}><path d="m18 2-12 10 12 10z" fill="#000" /></Icon></ScrollEnd>
          <Track><Thumb /></Track>
          <ScrollEnd aria-label="Défiler à droite"><Icon w={8}><path d="m6 2 12 10-12 10z" fill="#000" /></Icon></ScrollEnd>
        </Scroller>
        <BarButton $w={26} aria-label="Zoom auto"><ZoomGlass fill="#d0d6d9"><path d="M21 2v11M2 21.500h12" stroke={blue} strokeWidth="1.500" /><path d="m18.500 5 2.500-4 2.500 4zM18.500 10l2.500 4 2.500-4zM4 19l-4 2.500L4 24zM11 19l4 2.500L11 24z" fill={blue} /></ZoomGlass></BarButton>
        <BarButton $w={26} aria-label="Zoom arrière"><ZoomGlass><path d="M6 9h7" stroke={blue} strokeWidth="2.200" /></ZoomGlass></BarButton>
        <BarButton $w={26} aria-label="Zoom avant"><ZoomGlass><path d="M6 9h7M9.500 5.500v7" stroke={blue} strokeWidth="2.200" /></ZoomGlass></BarButton>
        <BarButton $w={21} aria-label="Clavier">
          <Icon w={18} h={16} box="0 0 18 16"><path d="M0 1h18v5H0z" fill="#fff" /><path d="M2 3.500h16" stroke="#222" strokeWidth="3" strokeDasharray="3 1" /><path d="M7 8h4v3h3l-5 5-5-5h3z" fill="#1f6ac8" /></Icon>
        </BarButton>
      </BottomBar>

      <TaskBar>
        {tasks.map(([name, art, state]) => (
          <Task key={name} $active={state === "active"} $open={!!state || name === "Explorateur"} aria-label={name}>
            <Icon>{art}</Icon>
          </Task>
        ))}
        <Spacer />
        <Clock><span>15:54</span><span>08/12/2023</span></Clock>
      </TaskBar>
    </App_>
  );
}
